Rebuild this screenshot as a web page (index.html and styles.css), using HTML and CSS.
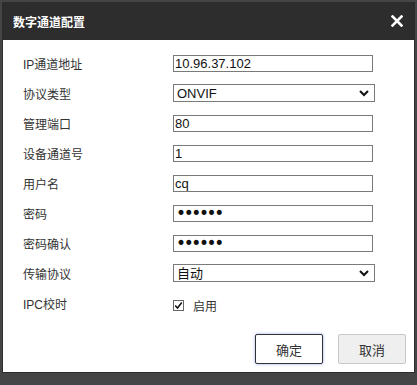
FILE: index.html
```html
<!DOCTYPE html>
<html lang="zh-CN">
<head>
  <meta charset="UTF-8" />
  <title>数字通道配置</title>
  <link rel="stylesheet" href="styles.css">
</head>
<body>
  <div class="dialog">
    <div class="dialog-header">
      <span class="dialog-title">数字通道配置</span>
      <span class="dialog-close">
        <svg width="12" height="12" viewBox="0 0 12 12">
          <path d="M1.5 1.5 L10.5 10.5 M10.5 1.5 L1.5 10.5" stroke="#fff" stroke-width="2.6" stroke-linecap="square"/>
        </svg>
      </span>
    </div>

    <div class="dialog-body">
      <div class="form">
        <div class="row">
          <span class="label">IP通道地址</span>
          <input class="text-input" type="text" value="10.96.37.102">
        </div>
        <div class="row">
          <span class="label">协议类型</span>
          <span class="select-wrap">
            <select class="select"><option>ONVIF</option></select>
            <svg class="select-arrow" width="10" height="7" viewBox="0 0 10 7"><path d="M1 1 L5 5 L9 1" fill="none" stroke="#111" stroke-width="2"/></svg>
          </span>
        </div>
        <div class="row">
          <span class="label">管理端口</span>
          <input class="text-input" type="text" value="80">
        </div>
        <div class="row">
          <span class="label">设备通道号</span>
          <input class="text-input" type="text" value="1">
        </div>
        <div class="row">
          <span class="label">用户名</span>
          <input class="text-input" type="text" value="cq">
        </div>
        <div class="row">
          <span class="label">密码</span>
          <input class="text-input password" type="password" value="123456">
        </div>
        <div class="row">
          <span class="label">密码确认</span>
          <input class="text-input password" type="password" value="123456">
        </div>
        <div class="row">
          <span class="label">传输协议</span>
          <span class="select-wrap">
            <select class="select"><option>自动</option></select>
            <svg class="select-arrow" width="10" height="7" viewBox="0 0 10 7"><path d="M1 1 L5 5 L9 1" fill="none" stroke="#111" stroke-width="2"/></svg>
          </span>
        </div>
        <div class="row">
          <span class="label">IPC校时</span>
          <label class="check">
            <span class="check-box">
              <svg width="9" height="9" viewBox="0 0 9 9"><path d="M1.2 4.6 L3.5 7 L7.8 1.5" fill="none" stroke="#111" stroke-width="1.5"/></svg>
            </span>
            启用
          </label>
        </div>
      </div>

      <div class="actions">
        <button class="btn btn-primary">确定</button>
        <button class="btn">取消</button>
      </div>
    </div>
  </div>
</body>
</html>
```

FILE: styles.css
```css
* {
  box-sizing: border-box;
  margin: 0;
  padding: 0;
}

body {
  background: #454545;
  font-family: 'Liberation Sans', 'Noto Sans CJK SC', sans-serif;
  font-size: 12px;
  color: #333;
  padding: 2px;
}

.dialog {
  width: 413px;
  background: #2d2d2d;
  border: 1px solid #2d2d2d;
  border-top: 0;
}

.dialog-header {
  height: 38px;
  display: flex;
  align-items: center;
  justify-content: space-between;
  padding: 0 11px 0 10px;
}

.dialog-title {
  color: #fff;
  font-weight: bold;
  font-size: 12px;
}

.dialog-close {
  display: flex;
}

.dialog-body {
  background: #fff;
  padding: 8px 8px 8px 20px;
}

.row {
  display: flex;
  align-items: center;
  height: 30px;
}

.label {
  width: 150px;
}

.text-input {
  width: 200px;
  height: 17px;
  border: 1px solid #7a7a7a;
  padding: 0 1px;
  font-family: 'Liberation Sans', 'Noto Sans CJK SC', sans-serif;
  font-size: 13px;
  color: #111;
  outline: none;
}

.password {
  font-family: 'DejaVu Sans', sans-serif;
  font-size: 17px;
  letter-spacing: -2.4px;
  padding-left: 2px;
  line-height: 15px;
}

.select-wrap {
  position: relative;
  display: flex;
}

.select {
  appearance: none;
  width: 202px;
  height: 18px;
  border: 1px solid #7a7a7a;
  border-radius: 0;
  background: #fff;
  padding: 0 3px;
  font-family: 'Liberation Sans', 'Noto Sans CJK SC', sans-serif;
  font-size: 13px;
  color: #111;
}

.select-arrow {
  position: absolute;
  right: 6px;
  top: 6px;
}

.check {
  display: flex;
  align-items: center;
  gap: 9px;
  font-size: 12px;
  margin-top: 4px;
}

.check-box {
  width: 11px;
  height: 11px;
  border: 1px solid #666;
  display: flex;
  align-items: center;
  justify-content: center;
}

.actions {
  display: flex;
  justify-content: flex-end;
  gap: 15px;
  margin-top: 16px;
}

.btn {
  width: 68px;
  height: 30px;
  border: 1px solid #c8c8c8;
  border-radius: 2px;
  background: #efefef;
  font-family: 'Liberation Sans', 'Noto Sans CJK SC', sans-serif;
  font-size: 13px;
  color: #333;
}

.btn-primary {
  background: #fff;
  border-color: #333;
  box-shadow: 0 0 3px rgba(70, 110, 230, 0.6);
}
```
